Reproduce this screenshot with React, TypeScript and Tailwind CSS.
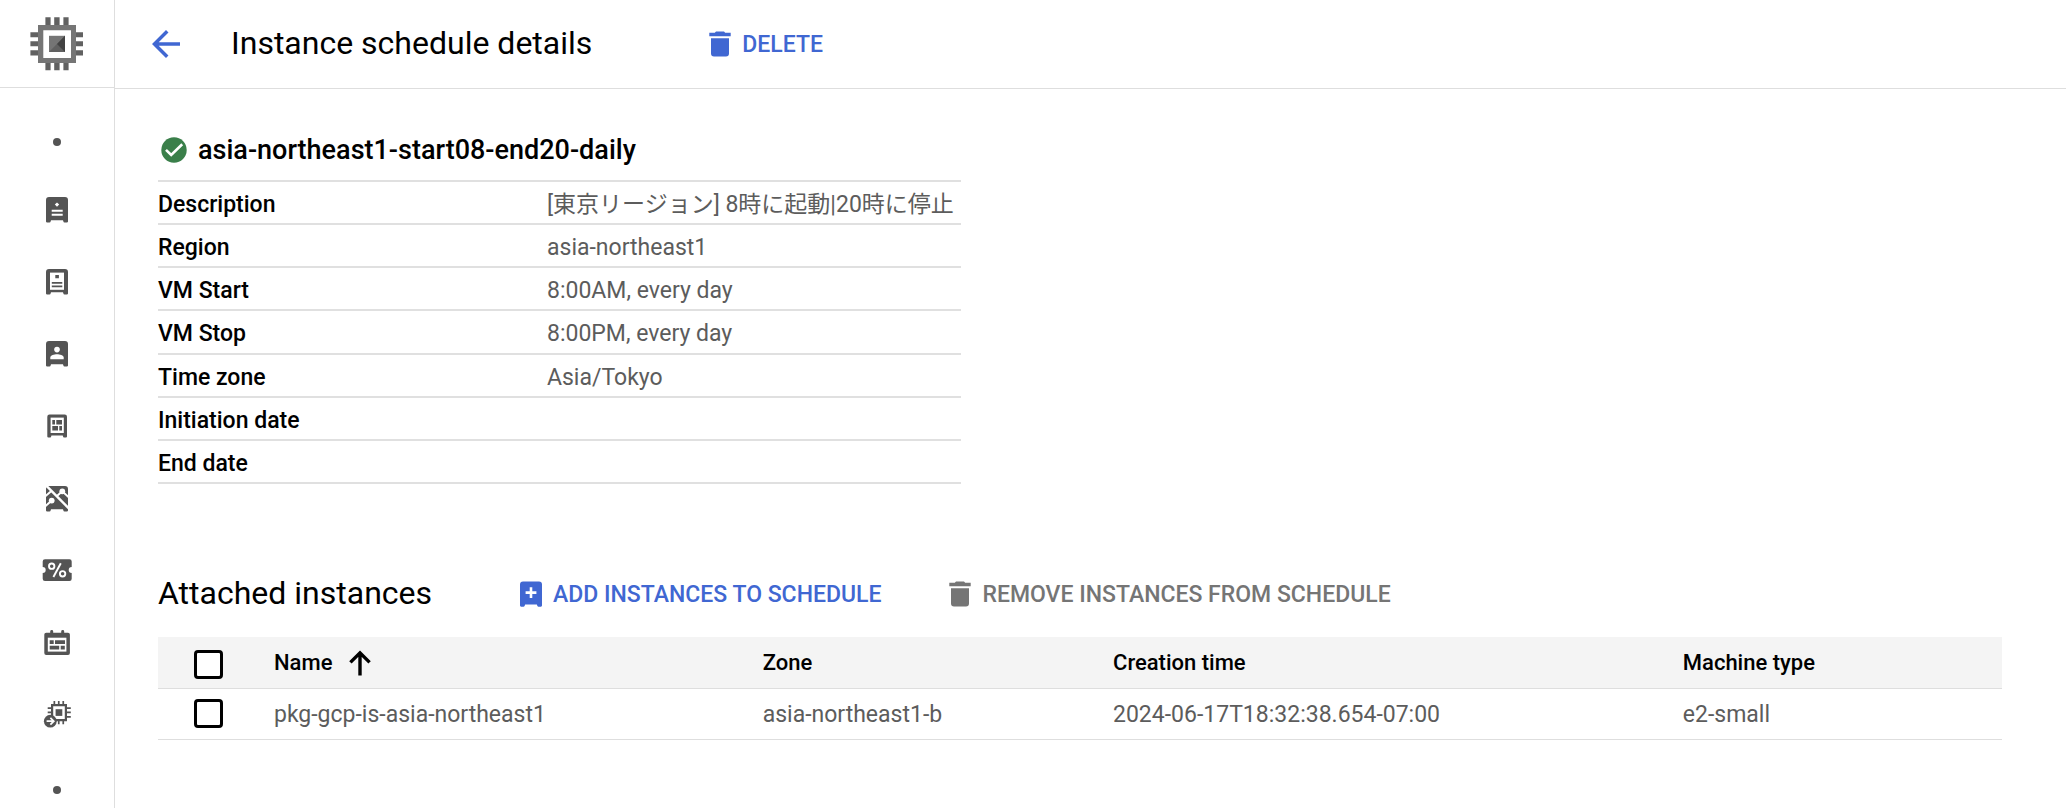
import type { ReactNode } from "react";

const FONT = "font-[Roboto,'Noto_Sans_CJK_JP',sans-serif]";

function NavSvg({ children }: { children: ReactNode }) {
  return (
    <svg viewBox="0 0 32 32" className="size-8" fill="#545454" aria-hidden="true">
      {children}
    </svg>
  );
}

const CABINET = "M8 3H24Q27 3 27 6V27.5Q27 28.6 25.8 28.6H23.5Q22.6 28.6 22.2 27L22 26.3H10L9.8 27Q9.4 28.6 8.5 28.6H6.2Q5 28.6 5 27.5V6Q5 3 8 3Z";

function InstancesIcon() {
  return (
    <NavSvg>
      <path d={CABINET} />
      <path fill="#fff" d="M16 8.4L18.2 10.6L16 12.8L13.8 10.6ZM10.7 15.8H21.7V17.8H10.7ZM10.7 19.8H21.7V21.8H10.7Z" />
    </NavSvg>
  );
}

function TemplatesIcon() {
  return (
    <NavSvg>
      <path d={CABINET} />
      <path fill="#fff" d="M9 6.6H23V23.8H9Z" />
      <path d="M14.3 9H17.9V12.3H14.3ZM10.8 16H21.3V17.8H10.8ZM10.8 19.4H21.3V21.2H10.8Z" />
    </NavSvg>
  );
}

function SoleTenantIcon() {
  return (
    <NavSvg>
      <path d={CABINET} />
      <circle cx="16" cy="11.6" r="2.8" fill="#fff" />
      <path fill="#fff" d="M9.3 21.2V19.6C9.3 17.2 13.2 16.2 16 16.2S22.7 17.2 22.7 19.6V21.2Z" />
    </NavSvg>
  );
}

function MachineImagesIcon() {
  return (
    <NavSvg>
      <path d="M8.5 4.4H23.7Q26 4.4 26 6.7V26.4Q26 27.5 24.9 27.5H23Q22.2 27.5 21.9 26L21.8 25.6H10.4L10.3 26Q10 27.5 9.2 27.5H7.4Q6.3 27.5 6.3 26.4V6.7Q6.3 4.4 8.5 4.4Z" />
      <path fill="#fff" d="M9.6 7.6H22.8V23H9.6Z" />
      <path d="M11.3 10H14V14.4H11.3ZM15.3 10H21V14.4H15.3ZM11.3 16H17V20.6H11.3ZM18.3 16H21V20.6H18.3Z" />
    </NavSvg>
  );
}

function TpuIcon() {
  return (
    <NavSvg>
      <g transform="translate(0 1)">
        <path d={CABINET} />
        <g stroke="#fff" strokeWidth="2" fill="none">
          <path d="M4.5 1.8L27.8 25.4" strokeWidth="2.4" />
          <path d="M15.4 13.6L21.3 8.3L28 14.4" />
          <path d="M4 23.6L10.7 17.6" />
          <path d="M4 13.4L10.4 8" />
        </g>
        <circle cx="21.3" cy="8.3" r="2.9" fill="#fff" />
        <circle cx="10.7" cy="17.6" r="2.9" fill="#fff" />
      </g>
    </NavSvg>
  );
}

function DiscountIcon() {
  return (
    <NavSvg>
      <path d="M4 5.2H28.5Q30.7 5.2 30.7 7.4V13A3 3 0 0 0 30.7 19V24.8Q30.7 27 28.5 27H4Q1.7 27 1.7 24.8V19A3 3 0 0 0 1.7 13V7.4Q1.7 5.2 4 5.2Z" />
      <g fill="none" stroke="#fff" strokeWidth="1.9">
        <circle cx="10.7" cy="12.2" r="2.7" />
        <circle cx="21.6" cy="19.8" r="2.7" />
        <path d="M19.8 9.2L12.4 23" />
      </g>
    </NavSvg>
  );
}

function ReservationsIcon() {
  return (
    <NavSvg>
      <path d="M9.2 6.7V5.4Q9.2 4 10.7 4T12.2 5.4V6.7H20.2V5.4Q20.2 4 21.7 4T23.2 5.4V6.7H27Q28.9 6.7 28.9 8.6V27Q28.9 28.9 27 28.9H5.2Q3.3 28.9 3.3 27V8.6Q3.3 6.7 5.2 6.7Z" />
      <path fill="#fff" d="M6.8 11.7H25.4V25.6H6.8Z" />
      <path d="M8.7 14.3H12.7V18H8.7ZM14 14.3H24V18H14ZM8.7 19.7H18.2V23.4H8.7ZM19.7 19.7H23.8V23.4H19.7Z" />
    </NavSvg>
  );
}

function MigrateIcon() {
  return (
    <NavSvg>
      <path d="M12.5 3H14.2V7H12.5ZM16.9 3H18.6V7H16.9ZM21.4 3H23.1V7H21.4ZM16.9 22H18.6V26.2H16.9ZM21.4 22H23.1V26.2H21.4ZM6.7 9.2H11V10.9H6.7ZM6.7 13.6H11V15.3H6.7ZM25 9.2H29.8V10.9H25ZM25 13.6H29.8V15.3H25ZM25 18H29.8V19.7H25Z" />
      <path fillRule="evenodd" d="M10 6H26V23.2H10ZM12.2 8.2V21H23.8V8.2Z" />
      <path d="M14.6 11.2H21.3V17.9H14.6Z" />
      <circle cx="9.3" cy="23.2" r="6.4" />
      <path fill="none" stroke="#fff" strokeWidth="1.7" d="M5.6 23.2H12.6M9.4 19.8L12.8 23.2L9.4 26.6" />
    </NavSvg>
  );
}

function ComputeLogo() {
  return (
    <svg viewBox="0 0 54 54" className="size-[54px]" aria-hidden="true">
      <path
        fill="#616161"
        d="M15.4 0.2H20.6V8H15.4ZM24.2 0.2H29.6V8H24.2ZM33.4 0.2H38.6V8H33.4ZM15.4 46H20.6V53.2H15.4ZM24.2 46H29.6V53.2H24.2ZM33.4 46H38.6V53.2H33.4ZM0.4 15.2H8V20.2H0.4ZM0.4 24.2H8V29.2H0.4ZM0.4 33.2H8V38.4H0.4ZM46 15.2H53V20.2H46ZM46 24.2H53V29.2H46ZM46 33.2H53V38.4H46Z"
      />
      <path fill="#757575" fillRule="evenodd" d="M8 8H46V46H8ZM13.3 13.2V41H41V13.2Z" />
      <path fill="#757575" d="M19 18.8H35V35H19Z" />
      <path fill="#616161" d="M35 18.8V35H19Z" />
      <path fill="#424242" d="M35 18.8V35L27 27Z" />
    </svg>
  );
}

function TrashIcon() {
  return (
    <svg viewBox="0 0 22 26" className="h-[26px] w-[22px] shrink-0" fill="currentColor" aria-hidden="true">
      <path d="M0.3 1.8H5.8L7 0.4H15L16.2 1.8H21.7V5.2H0.3ZM2 7.2H20V22.6Q20 25.6 17 25.6H5Q2 25.6 2 22.6Z" />
    </svg>
  );
}

function AddInstanceIcon() {
  return (
    <svg viewBox="0 0 22 26" className="h-[26px] w-[22px] shrink-0" fill="currentColor" aria-hidden="true">
      <path
        fillRule="evenodd"
        d="M3 0.4H19Q22 0.4 22 3.4V24.6Q22 25.7 20.9 25.7H18.4Q17.4 25.7 17 24L16.9 23.6H5.1L5 24Q4.6 25.7 3.6 25.7H1.1Q0 25.7 0 24.6V3.4Q0 0.4 3 0.4ZM9.7 6.2V10.3H5.6V12.9H9.7V17H12.3V12.9H16.4V10.3H12.3V6.2Z"
      />
    </svg>
  );
}

function CheckCircle() {
  return (
    <svg viewBox="0 0 26 26" className="size-[26px] shrink-0" aria-hidden="true">
      <circle cx="13" cy="13" r="12.7" fill="#3a7f4a" />
      <path d="M5 12.8L10.2 18L21.2 7.2" fill="none" stroke="#fff" strokeWidth="2.6" />
    </svg>
  );
}

const navItems = [
  { label: "VM instances", Icon: InstancesIcon },
  { label: "Instance templates", Icon: TemplatesIcon },
  { label: "Sole-tenant nodes", Icon: SoleTenantIcon },
  { label: "Machine images", Icon: MachineImagesIcon },
  { label: "TPUs", Icon: TpuIcon },
  { label: "Committed use discounts", Icon: DiscountIcon },
  { label: "Reservations", Icon: ReservationsIcon },
  { label: "Migrate to Virtual Machines", Icon: MigrateIcon },
];

const details = [
  ["Description", "[東京リージョン] 8時に起動|20時に停止"],
  ["Region", "asia-northeast1"],
  ["VM Start", "8:00AM, every day"],
  ["VM Stop", "8:00PM, every day"],
  ["Time zone", "Asia/Tokyo"],
  ["Initiation date", ""],
  ["End date", ""],
];

const instances = [
  {
    name: "pkg-gcp-is-asia-northeast1",
    zone: "asia-northeast1-b",
    created: "2024-06-17T18:32:38.654-07:00",
    type: "e2-small",
  },
];

function Dot() {
  return <span className="size-2 rounded-full bg-[#545454]" />;
}

function Checkbox({ label }: { label: string }) {
  return (
    <input
      type="checkbox"
      aria-label={label}
      className="block size-[29px] appearance-none rounded-[4px] border-3 border-black bg-white checked:bg-black"
    />
  );
}

export default function App() {
  return (
    <div className={`flex min-h-screen bg-white text-black ${FONT}`}>
      <aside className="flex w-[115px] shrink-0 flex-col border-r border-[#dedede]">
        <div className="flex h-22 items-center justify-center border-b border-[#dedede]">
          <ComputeLogo />
        </div>
        <nav aria-label="Compute Engine" className="flex flex-col items-center pt-[50px]">
          <Dot />
          <ul className="flex flex-col gap-10 pt-12 pb-14">
            {navItems.map(({ label, Icon }) => (
              <li key={label}>
                <a href="#" aria-label={label} className="block">
                  <Icon />
                </a>
              </li>
            ))}
          </ul>
          <Dot />
        </nav>
      </aside>

      <div className="min-w-0 flex-1">
        <header className="flex h-[89px] items-center border-b border-[#dedede] pl-[30px]">
          <a href="#" aria-label="Back" className="text-[#4067d2]">
            <svg viewBox="0 0 24 24" className="size-[42px]" fill="currentColor" aria-hidden="true">
              <path d="M20 11H7.83l5.59-5.59L12 4l-8 8 8 8 1.41-1.41L7.83 13H20z" />
            </svg>
          </a>
          <h1 className="ml-11 pb-0.5 text-[32px] leading-[38px]">Instance schedule details</h1>
          <button type="button" className="ml-[117px] flex items-center gap-[11px] text-[23px] leading-8 font-medium text-[#4067d2]">
            <TrashIcon />
            <span className="pt-0.5">DELETE</span>
          </button>
        </header>

        <main className="pt-[43px] pr-16 pl-[43px]">
          <div className="flex h-9 items-center gap-[11px] pl-[3px]">
            <CheckCircle />
            <h2 className="text-[27px] leading-9 font-medium">asia-northeast1-start08-end20-daily</h2>
          </div>

          <table className="mt-3 h-[304px] w-[803px] border-t-2 border-[#e0e0e0] text-[23px] leading-9">
            <tbody>
              {details.map(([label, value]) => (
                <tr key={label} className="border-b-2 border-[#e0e0e0]">
                  <th scope="row" className="w-[389px] p-0 pt-[5px] text-left font-medium">
                    {label}
                  </th>
                  <td className="p-0 pt-[5px] whitespace-nowrap text-[#5c5c5c]">{value}</td>
                </tr>
              ))}
            </tbody>
          </table>

          <div className="mt-[90px] flex items-center">
            <h2 className="pb-0.5 text-[32px] leading-[38px]">Attached instances</h2>
            <button type="button" className="ml-[88px] flex items-center gap-[11px] text-[23px] leading-8 font-medium text-[#4067d2]">
              <AddInstanceIcon />
              <span className="pt-0.5">ADD INSTANCES TO SCHEDULE</span>
            </button>
            <button type="button" className="ml-[68px] flex items-center gap-[11px] text-[23px] leading-8 font-medium text-[#757575]">
              <TrashIcon />
              <span className="pt-0.5">REMOVE INSTANCES FROM SCHEDULE</span>
            </button>
          </div>

          <table className="mt-[23px] w-full table-fixed text-left">
            <colgroup>
              <col className="w-[116px]" />
              <col className="w-[26.5%]" />
              <col className="w-[19%]" />
              <col className="w-[30.9%]" />
              <col />
            </colgroup>
            <thead>
              <tr className="h-[51px] border-b border-[#dedede] bg-[#f4f4f4] text-[22px] leading-8">
                <th scope="col" className="p-0 pt-1 pl-9">
                  <Checkbox label="Select all instances" />
                </th>
                <th scope="col" className="p-0 pt-0.5 font-medium" aria-sort="ascending">
                  <button type="button" className="flex items-center gap-4">
                    Name
                    <svg viewBox="0 0 24 26" className="h-[26px] w-6" fill="none" stroke="currentColor" strokeWidth="3.4" aria-hidden="true">
                      <path d="M12 25.4V3M2.4 12.4L12 2.8L21.6 12.4" />
                    </svg>
                  </button>
                </th>
                <th scope="col" className="p-0 pt-0.5 font-medium">Zone</th>
                <th scope="col" className="p-0 pt-0.5 font-medium">Creation time</th>
                <th scope="col" className="p-0 pt-0.5 font-medium">Machine type</th>
              </tr>
            </thead>
            <tbody className="text-[23px] leading-8 text-[#5c5c5c]">
              {instances.map((vm) => (
                <tr key={vm.name} className="h-[51px] border-b border-[#dedede]">
                  <td className="p-0 pl-9">
                    <Checkbox label={`Select ${vm.name}`} />
                  </td>
                  <td className="p-0 pt-0.5">{vm.name}</td>
                  <td className="p-0 pt-0.5">{vm.zone}</td>
                  <td className="p-0 pt-0.5">{vm.created}</td>
                  <td className="p-0 pt-0.5">{vm.type}</td>
                </tr>
              ))}
            </tbody>
          </table>
        </main>
      </div>
    </div>
  );
}
